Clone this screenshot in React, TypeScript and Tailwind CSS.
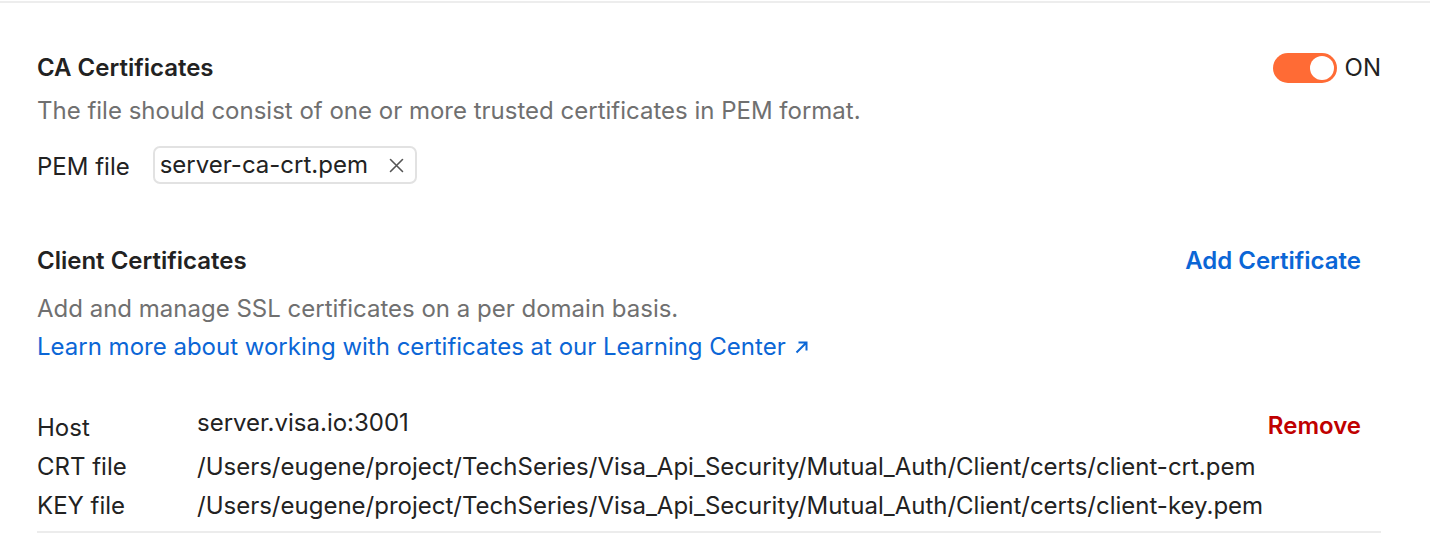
import React from "react";

export default function App() {
  return (
    <div
      className="w-[1430px] h-[540px] bg-white overflow-hidden"
      style={{ fontFamily: "Inter, 'Noto Sans', sans-serif" }}
    >
      <div className="mt-px border-t-2 border-[#ededed]" />
      <div className="pl-[37px] pr-[49px]">
        {/* CA Certificates */}
        <div className="mt-[50px] flex items-center justify-between">
          <h2 className="text-[24px] leading-[30px] font-semibold text-[#222]">CA Certificates</h2>
          <div className="flex items-center gap-[8px]">
            <div className="w-[64px] h-[30px] rounded-full bg-[#ff6b35] flex items-center justify-end pr-[3px]">
              <div className="w-[24px] h-[24px] rounded-full bg-white" />
            </div>
            <span className="text-[24px] leading-[30px] text-[#222]">ON</span>
          </div>
        </div>
        <p className="mt-[13px] text-[24px] leading-[30px] text-[#707070]">
          The file should consist of one or more trusted certificates in PEM format.
        </p>
        <div className="mt-[20px] flex items-center gap-[23px]">
          <span className="text-[24px] leading-[30px] text-[#222] mt-[3px]">PEM file</span>
          <div className="h-[38px] pl-[5px] pr-[11px] border-2 border-[#e2e2e2] rounded-[7px] flex items-center gap-[21px]">
            <span className="text-[24px] leading-[30px] text-[#222]">server-ca-crt.pem</span>
            <svg width="15" height="15" viewBox="0 0 15 15" fill="none" stroke="#555" strokeWidth="1.6" strokeLinecap="round">
              <path d="M1.5 1.5L13.5 13.5M13.5 1.5L1.5 13.5" />
            </svg>
          </div>
        </div>

        {/* Client Certificates */}
        <div className="mt-[62px] flex items-center justify-between pr-[20px]">
          <h2 className="text-[24px] leading-[30px] font-semibold text-[#222]">Client Certificates</h2>
          <button className="text-[24px] leading-[30px] font-semibold text-[#0b66d6]">Add Certificate</button>
        </div>
        <p className="mt-[18px] text-[24px] leading-[30px] text-[#707070]">
          Add and manage SSL certificates on a per domain basis.
        </p>
        <a className="mt-[8px] flex items-center text-[24px] leading-[30px] text-[#0b66d6]">
          Learn more about working with certificates at our Learning Center
          <svg className="ml-[9px] mt-[1px]" width="13" height="13" viewBox="0 0 13 13" fill="none" stroke="#0b66d6" strokeWidth="2">
            <path d="M1.5 11.5L11 2M3.5 1.5H11.5V9.5" />
          </svg>
        </a>

        <div className="mt-[46px] flex flex-col text-[24px] leading-[30px] text-[#222]">
          <div className="h-[44px] flex items-start pr-[20px]">
            <span className="w-[160px] mt-[5px]">Host</span>
            <span className="flex-1">server.visa.io:3001</span>
            <button className="mt-[3px] font-semibold text-[#c00000]">Remove</button>
          </div>
          <div className="h-[39px] flex items-start">
            <span className="w-[160px]">CRT file</span>
            <span>/Users/eugene/project/TechSeries/Visa_Api_Security/Mutual_Auth/Client/certs/client-crt.pem</span>
          </div>
          <div className="h-[30px] flex items-start">
            <span className="w-[160px]">KEY file</span>
            <span>/Users/eugene/project/TechSeries/Visa_Api_Security/Mutual_Auth/Client/certs/client-key.pem</span>
          </div>
        </div>
        <div className="mt-[10px] border-t-2 border-[#ececec]" />
      </div>
    </div>
  );
}
